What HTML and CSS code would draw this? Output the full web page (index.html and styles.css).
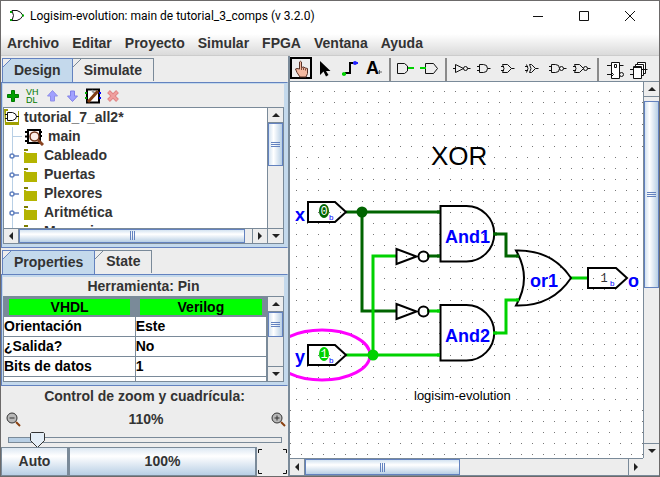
FILE: index.html
```html
<!DOCTYPE html>
<html lang="es">
<head>
<meta charset="utf-8">
<title>Logisim-evolution: main de tutorial_3_comps (v 3.2.0)</title>
<link rel="stylesheet" href="styles.css">
</head>
<body>
<svg width="0" height="0" class="defs" aria-hidden="true">
  <defs>
    <symbol id="folder" viewBox="0 0 14 16"><path d="M0 1h4v2h-4z" fill="#7d7d00"/><path d="M0 4h1.500l1 1h10.500v10h-13z" fill="#b4b400"/></symbol>
    <symbol id="handle" viewBox="0 0 10 8"><circle cx="3" cy="4" r="2" fill="#fff" stroke="#6382bf" stroke-width="1.500"/><path d="M5 4h5" stroke="#6382bf" stroke-width="1.500"/></symbol>
  </defs>
</svg>
<div class="window">
  <header class="titlebar">
    <svg class="logo" width="16" height="16" viewBox="0 0 16 16" fill="none" stroke="#111"><path d="M3 2.500h5q4 1 6 5q-2 4-6 5h-5q3-5 0-10"/><path d="M1 4h2M1 12h2M13 7.500h2" stroke="#0a0" stroke-width="2"/></svg>
    <h1>Logisim-evolution: main de tutorial_3_comps (v 3.2.0)</h1>
    <div class="winbuttons">
      <button aria-label="Minimizar"><svg width="12" height="12" viewBox="0 0 12 12"><path d="M1 6.500h10"/></svg></button>
      <button aria-label="Maximizar"><svg width="12" height="12" viewBox="0 0 12 12"><path d="M1.500 1.500h9v9h-9z"/></svg></button>
      <button aria-label="Cerrar"><svg width="12" height="12" viewBox="0 0 12 12"><path d="M1 1l10 10M11 1l-10 10"/></svg></button>
    </div>
  </header>
  <nav class="menubar">
    <button>Archivo</button><button>Editar</button><button>Proyecto</button><button>Simular</button><button>FPGA</button><button>Ventana</button><button>Ayuda</button>
  </nav>
  <main class="work">
    <aside class="side">
      <section class="pane explorer">
        <div class="tabs"><button class="tab active">Design</button><button class="tab">Simulate</button></div>
        <div class="panel">
          <div class="tools">
            <button aria-label="Añadir circuito"><svg width="16" height="16" viewBox="0 0 16 16"><path d="M6.500 2.500h3v4h4v3h-4v4h-3v-4h-4v-3h4z" fill="#00a000" stroke="#007a00"/></svg></button>
            <button aria-label="Añadir VHDL"><svg width="16" height="18" viewBox="0 0 16 18" class="vhdl"><text x="1" y="8">VH</text><text x="1" y="16">DL</text></svg></button>
            <button aria-label="Subir"><svg width="16" height="16" viewBox="0 0 16 16"><path d="M7.500 2.500l5 5.500h-3v5h-4v-5h-3z" fill="#a0a0ff" stroke="#8f8fe8"/></svg></button>
            <button aria-label="Bajar"><svg width="16" height="16" viewBox="0 0 16 16"><path d="M7.500 13.500l5-5.500h-3v-5h-4v5h-3z" fill="#a0a0ff" stroke="#8080e8"/></svg></button>
            <button aria-label="Editar aspecto"><svg width="16" height="16" viewBox="0 0 16 16"><path d="M2 1.500h12v13h-12z" fill="#fff" stroke="#000" stroke-width="2"/><path d="M1 4v2M1 9v2" stroke="#0a0" stroke-width="2"/><path d="M15 4v2M15 9v2" stroke="#00f" stroke-width="2"/><path d="M7 2q1 3 4 3" stroke="#999" stroke-width="2" fill="none"/><path d="M3 14l10-11" stroke="#803c14" stroke-width="3"/></svg></button>
            <button aria-label="Eliminar"><svg width="16" height="16" viewBox="0 0 16 16"><path d="M3.500 3.500l9 9M12.500 3.500l-9 9" stroke="#df8585" stroke-width="4"/><path d="M4 4l8 8M12 4l-8 8" stroke="#f0a0a0" stroke-width="2"/></svg></button>
          </div>
          <div class="scroller">
            <ul class="tree">
              <li class="root"><svg width="17" height="17" viewBox="0 0 17 17"><path d="M0 0h4v2h11v14h-14z" fill="#a0a000"/><path d="M2 2h12v11h-12z" fill="#fff"/><path d="M3.500 3.500h5q4 1 4 4t-4 4h-5z" fill="#fff" stroke="#111"/><path d="M1 5.500h3M1 9.500h3M12 7.500h3" stroke="#111"/></svg>tutorial_7_all2*</li>
              <li class="circuit"><svg width="19" height="18" viewBox="0 0 19 18"><path d="M3 2h12v13h-12z" fill="#fff" stroke="#000" stroke-width="2"/><path d="M0 4h3M0 8.500h3M0 13h3M15 4h2M15 8h2" stroke="#000" stroke-width="2"/><circle cx="9.500" cy="8.500" r="4.500" fill="#fbeee8" stroke="#70351a" stroke-width="1.500"/><path d="M13 12l5 5" stroke="#8a4420" stroke-width="3"/></svg>main</li>
              <li><svg class="handle" width="10" height="8"><use href="#handle"/></svg><svg width="14" height="16"><use href="#folder"/></svg>Cableado</li>
              <li><svg class="handle" width="10" height="8"><use href="#handle"/></svg><svg width="14" height="16"><use href="#folder"/></svg>Puertas</li>
              <li><svg class="handle" width="10" height="8"><use href="#handle"/></svg><svg width="14" height="16"><use href="#folder"/></svg>Plexores</li>
              <li><svg class="handle" width="10" height="8"><use href="#handle"/></svg><svg width="14" height="16"><use href="#folder"/></svg>Aritmética</li>
              <li><svg class="handle" width="10" height="8"><use href="#handle"/></svg><svg width="14" height="16"><use href="#folder"/></svg>Memoria</li>
            </ul>
            <div class="vbar"><button class="up" aria-label="Arriba"></button><div class="rail"><i class="thumb tree-v"></i></div><button class="down" aria-label="Abajo"></button></div>
            <div class="hbar"><button class="left" aria-label="Izquierda"></button><div class="rail"><i class="thumb tree-h"></i></div><button class="right" aria-label="Derecha"></button></div>
          </div>
        </div>
      </section>
      <section class="pane props">
        <div class="tabs"><button class="tab active">Properties</button><button class="tab">State</button></div>
        <div class="panel">
          <h2>Herramienta: Pin</h2>
          <div class="scroller">
            <div class="tablebox">
              <table>
                <thead><tr><th><button>VHDL</button></th><th><button>Verilog</button></th></tr></thead>
                <tbody>
                  <tr><td>Orientación</td><td>Este</td></tr>
                  <tr><td>¿Salida?</td><td>No</td></tr>
                  <tr><td>Bits de datos</td><td>1</td></tr>
                  <tr><td></td><td></td></tr>
                </tbody>
              </table>
            </div>
            <div class="vbar"><button class="up" aria-label="Arriba"></button><div class="rail"><i class="thumb props-v"></i></div><button class="down" aria-label="Abajo"></button></div>
          </div>
        </div>
      </section>
      <section class="zoom">
        <label for="zoom">Control de zoom y cuadrícula:</label>
        <div class="zoomrow">
          <button aria-label="Alejar"><svg width="15" height="16" viewBox="0 0 15 16"><circle cx="6" cy="6" r="5" fill="#b8b8b8" stroke="#333"/><path d="M3.500 6h5" stroke="#333"/><path d="M10 10l4 4" stroke="#8a4010" stroke-width="2"/></svg></button>
          <output for="zoom">110%</output>
          <button aria-label="Acercar"><svg width="15" height="16" viewBox="0 0 15 16"><circle cx="6" cy="6" r="5" fill="#b8b8b8" stroke="#333"/><path d="M3.500 6h5M6 3.500v5" stroke="#333"/><path d="M10 10l4 4" stroke="#8a4010" stroke-width="2"/></svg></button>
        </div>
        <input id="zoom" type="range" min="0" max="100" value="8">
        <div class="zoombuttons">
          <button class="auto">Auto</button><button class="full">100%</button>
          <button class="grid" aria-label="Cuadrícula"><svg width="31" height="28" viewBox="0 0 31 28" fill="none" stroke="#111"><path d="M1.500 5v-3.500h3.500M26 1.500h3.500v3.500M1.500 22v3.500h3.500M26 25.500h3.500v-3.500"/></svg></button>
        </div>
      </section>
    </aside>
    <section class="editor">
      <div class="toolbar">
        <button aria-label="Pulsar"><svg width="24" height="24" viewBox="0 0 24 24"><path d="M1 1h20v20h-20z" fill="#ededed" stroke="#000" stroke-width="2"/><path d="M9.500 12v-7q1-1.500 2 0v5.500l2-.5l2 1l2 .5v5l-1.500 3.500h-6l-3-4.500l-1.500-3.500l1.500-.5z" fill="#f4b9a0" stroke="#5a3226"/><path d="M11.500 10v3M13.500 10.500v2.500M15.500 11.500v2" stroke="#7a4a3a" fill="none"/></svg></button>
        <button aria-label="Editar"><svg width="24" height="24" viewBox="0 0 24 24"><path d="M6 4v14l3.500-3.500l2.500 5l2.500-1.500l-2.500-4h4.500z" fill="#000"/></svg></button>
        <button aria-label="Cablear"><svg width="24" height="24" viewBox="0 0 24 24"><path d="M7 16h5v-10h4" fill="none" stroke="#000" stroke-width="2"/><circle cx="6" cy="17" r="2" fill="#00d200"/><path d="M4 17h4" stroke="#00d200" stroke-width="2"/><circle cx="17" cy="6" r="2" fill="#22f"/><path d="M15 6h5" stroke="#22f" stroke-width="2"/></svg></button>
        <button aria-label="Texto"><svg width="24" height="24" viewBox="0 0 24 24"><text x="4" y="17" class="letter">A</text><path d="M17.500 13v4M16 15h4" stroke="#666"/></svg></button>
        <span class="sep"></span>
        <button aria-label="Pin de entrada"><svg class="gate" width="24" height="24" viewBox="0 0 24 24"><path d="M3.500 6.500h7l3 2.500v5l-3 2.500h-7z"/><path d="M14 11h6" class="on"/></svg></button>
        <button aria-label="Pin de salida"><svg class="gate" width="24" height="24" viewBox="0 0 24 24"><path d="M7.500 6.500h8l4 5l-4 5h-8z"/><path d="M2 11h6" class="on"/></svg></button>
        <span class="sep"></span>
        <button aria-label="NOT"><svg class="gate" width="24" height="24" viewBox="0 0 24 24"><path d="M3 11.500h2.500M5.500 7.500v8l8-4zM17.500 11.500h3"/><circle cx="15.500" cy="11.500" r="2"/></svg></button>
        <button aria-label="AND"><svg class="gate" width="24" height="24" viewBox="0 0 24 24"><path d="M5.500 7.500h4q4 0 4 4t-4 4h-4zM3 9.500h2.500M3 13.500h2.500M13.500 11.500h3"/></svg></button>
        <button aria-label="OR"><svg class="gate" width="24" height="24" viewBox="0 0 24 24"><path d="M4.500 7.500h5l4 4l-4 4h-5q3-4 0-8M3 9.500h3M3 13.500h3M13.500 11.500h3"/></svg></button>
        <button aria-label="XOR"><svg class="gate" width="24" height="24" viewBox="0 0 24 24"><path d="M4.500 7.500q3 4 0 8M7.500 7.500h2l4 4l-4 4h-2q3-4 0-8M3 9.500h3M3 13.500h3M13.500 11.500h3"/></svg></button>
        <button aria-label="NAND"><svg class="gate" width="24" height="24" viewBox="0 0 24 24"><path d="M5.500 7.500h4q4 0 4 4t-4 4h-4zM3 9.500h2.500M3 13.500h2.500M17.500 11.500h3"/><circle cx="15.500" cy="11.500" r="2"/></svg></button>
        <button aria-label="NOR"><svg class="gate" width="24" height="24" viewBox="0 0 24 24"><path d="M4.500 7.500h5l4 4l-4 4h-5q3-4 0-8M3 9.500h3M3 13.500h3M17.500 11.500h3"/><circle cx="15.500" cy="11.500" r="2"/></svg></button>
        <span class="sep"></span>
        <button aria-label="Biestable"><svg class="gate" width="24" height="24" viewBox="0 0 24 24"><path d="M9.500 5.500h8v16h-8z" fill="#fff"/><path d="M5 8.500h4.500M5 17.500h4.500M17.500 8.500h4M12.500 7.500v3h2v-3zM9.500 15.500l2 2l-2 2"/><circle cx="19.500" cy="17.500" r="2"/></svg></button>
        <button aria-label="Registro"><svg class="gate" width="24" height="24" viewBox="0 0 24 24"><path d="M11.500 5.500h8v11h-8z" fill="#fff"/><path d="M9.500 7.500h8v11h-8z" fill="#fff"/><path d="M7.500 9.500h8v12h-8z" fill="#fff"/><path d="M4 12.500h3.500M4 17.500h3.500M8 10.500h7M15.500 12.500h6"/></svg></button>
      </div>
      <div class="scroller">
        <div class="canvas">
          <svg class="circuit-drawing" width="1600" height="1000" viewBox="290 82 1600 1000">
            <defs>
              <pattern id="dotsA" x="301" y="91" width="11" height="11" patternUnits="userSpaceOnUse"><path d="M0 0h1v1h-1z" fill="#777"/></pattern>
              <pattern id="dotsB" x="296" y="91" width="11" height="11" patternUnits="userSpaceOnUse"><path d="M0 0h1v1h-1z" fill="#777"/></pattern>
            </defs>
            <rect x="290" y="81" width="1600" height="71" fill="url(#dotsA)"/>
            <rect x="290" y="152" width="1600" height="252" fill="url(#dotsB)"/>
            <rect x="290" y="404" width="1600" height="700" fill="url(#dotsA)"/>
            <ellipse cx="322" cy="355" rx="48" ry="25" class="mark"/>
            <g class="wire low"><path d="M346 212h94M362 212v99h34M427 256h13M494 234h12v22h13"/><circle cx="362" cy="212" r="4"/></g>
            <g class="wire high"><path d="M346 355h94M373 355v-99h23M427 311h13M494 333h12v-33h13M570 278h18"/><circle cx="373" cy="355" r="4"/></g>
            <g class="shape">
              <path d="M308 202h27l11 10l-11 10h-27z"/>
              <path d="M308 345h27l11 10l-11 10h-27z"/>
              <path d="M588 268h28l11 10l-11 10h-28z"/>
              <path d="M396.500 249v15l20-7.500z"/><circle cx="423.500" cy="256.500" r="5"/>
              <path d="M396.500 304v15l20-7.500z"/><circle cx="423.500" cy="311.500" r="5"/>
              <path d="M440.500 206h26a27.500 27.500 0 0 1 0 55.500h-26z"/>
              <path d="M440.500 305h26a27.500 27.500 0 0 1 0 55.500h-26z"/>
              <path d="M516 250.500q36-1 55 27.500q-19 28.500-55 27.500q16-27.500 0-55z"/>
            </g>
            <g class="wire low tip"><path d="M437 212h3M437 256h3M493 234h4M516 256h3"/></g>
            <g class="wire high tip"><path d="M437 311h3M437 355h3M493 333h4M516 300h3"/></g>
            <ellipse cx="324" cy="211" rx="5" ry="7" fill="#006400"/><ellipse cx="324" cy="354" rx="5" ry="7" fill="#00d200"/>
            <g class="bit"><text x="324" y="215" fill="#fff">0</text><text x="324" y="358" fill="#fff">1</text><text x="604" y="282" fill="#333">1</text></g>
            <g class="radix"><text x="329" y="220">b</text><text x="329" y="363">b</text><text x="610" y="286">b</text></g>
            <g class="label"><text x="295" y="221">x</text><text x="295" y="363">y</text><text x="628" y="287">o</text><text x="445" y="243">And1</text><text x="445" y="342">And2</text><text x="530" y="287">or1</text></g>
            <text x="431" y="165" class="heading">XOR</text>
            <text x="414" y="400" class="caption">logisim-evolution</text>
          </svg>
        </div>
        <div class="vbar"><button class="up" aria-label="Arriba"></button><div class="rail"><i class="thumb main-v"></i></div><button class="down" aria-label="Abajo"></button></div>
        <div class="hbar"><button class="left" aria-label="Izquierda"></button><div class="rail"><i class="thumb main-h"></i></div><button class="right" aria-label="Derecha"></button></div>
      </div>
    </section>
  </main>
</div>
</body>
</html>
```
FILE: styles.css
```css
* { box-sizing: border-box; }
html, body { height: 100%; }
body { margin: 0; background: #ededed; color: #333; font: bold 14px/19px "Liberation Sans", Arial, sans-serif; }
button { margin: 0; padding: 0; border: 0; background: none; color: inherit; font: inherit; }
svg { display: block; flex: none; }
.defs { position: absolute; }
.window { display: flex; flex-direction: column; height: 100vh; overflow: hidden; border: 1px solid #6c6a6a; }

.titlebar { display: flex; align-items: center; flex: none; height: 33px; padding: 0 6px 4px 8px; background: #fff; }
.titlebar h1 { flex: 1; margin: 0 0 0 5px; color: #000; font: 12px/16px Roboto, "Noto Sans", sans-serif; white-space: nowrap; }
.winbuttons { display: flex; }
.winbuttons button { display: flex; justify-content: center; width: 46px; }
.winbuttons svg { fill: none; stroke: #111; }

.menubar { display: flex; gap: 13px; flex: none; height: 22px; padding: 0 6px; background: linear-gradient(#fff, #dadada); border-bottom: 1px solid #ccc; }
.menubar button { height: 19px; }

.work { display: flex; flex: 1; min-height: 0; }
.side { display: flex; flex-direction: column; flex: 0 0 289px; border-right: 2px solid #7a8a99; }

.tabs { display: flex; height: 24px; padding: 0 1px; }
.tab { height: 23px; padding: 0 11px; border: 1px solid #7a8a99; border-bottom: 0; border-left: 0; background: linear-gradient(135deg, transparent 5px, #7a8a99 5px, #7a8a99 6px, #ededed 6px); }
.tab.active { height: 24px; border-color: #6382bf; border-left: 1px solid #6382bf; background: linear-gradient(135deg, #ededed 5px, #6382bf 5px, #6382bf 6px, #c4d9ec 6px); }
.panel { flex: 1; min-height: 0; display: flex; flex-direction: column; padding: 2px 3px 3px 1px; background: #c4d9ec; border: 1px solid #6382bf; border-right-color: #c4d9ec; }
.pane { display: flex; flex-direction: column; min-height: 0; padding-top: 2px; }
.explorer { flex: 192 1 0; }
.explorer .panel { padding-top: 1px; }
.props { flex: 138 1 0; }

.tools { display: flex; align-items: center; gap: 4px; height: 23px; padding-left: 2px; background: #ededed; }
.vhdl text { fill: #007a00; font: 9px "Liberation Sans", sans-serif; }

.scroller { display: grid; grid-template: minmax(0, 1fr) auto / minmax(0, 1fr) auto; flex: 1; min-height: 0; border: 1px solid #7a8a99; background: #ededed; }
.tree { margin: 0; padding: 0; overflow: hidden; list-style: none; background: linear-gradient(#b8cfe5, #b8cfe5) 8px 19px / 1px 100% no-repeat #fff; }
.tree li { display: flex; align-items: center; height: 19px; padding-left: 5px; }
.tree li svg + svg { margin: 0 6px 0 5px; }
.tree li.root { padding-left: 0; gap: 3px; }
.tree li.circuit { padding-left: 21px; gap: 4px; background: linear-gradient(#b8cfe5, #b8cfe5) 8px 9px / 10px 1px no-repeat; }

.vbar, .hbar { display: flex; background: #ededed; }
.vbar { flex-direction: column; width: 16px; border-left: 1px solid #7a8a99; }
.explorer .vbar { grid-row: 1 / 3; grid-column: 2; }
.hbar { height: 15px; border-top: 1px solid #7a8a99; }
.rail { flex: 1; display: flex; min-width: 0; min-height: 0; }
.vbar .rail { flex-direction: column; border: solid #7a8a99; border-width: 1px 0; }
.hbar .rail { border: solid #7a8a99; border-width: 0 1px; }
.vbar button, .hbar button { display: flex; align-items: center; justify-content: center; flex: 0 0 14px; }
.vbar button::before, .hbar button::before { content: ""; border: 4px solid transparent; }
.vbar .up::before { border-top: 0; border-bottom: 4px solid #222; }
.vbar .down::before { border-bottom: 0; border-top: 4px solid #222; }
.hbar .left::before { border-left: 0; border-right: 4px solid #222; }
.hbar .right::before { border-right: 0; border-left: 4px solid #222; }
.thumb { display: flex; align-items: center; justify-content: center; border: 1px solid #6382bf; background: linear-gradient(90deg, #d4e3f1, #fff 35%, #b8cfe5); }
.thumb::before { content: ""; width: 9px; height: 5px; background: repeating-linear-gradient(#6382bf 0 1px, transparent 1px 2px); }
.hbar .thumb { background: linear-gradient(#d4e3f1, #fff 35%, #b8cfe5); }
.hbar .thumb::before { width: 5px; height: 9px; background: repeating-linear-gradient(90deg, #6382bf 0 1px, transparent 1px 2px); }
.tree-v { height: 41%; }
.tree-h { width: 97%; }
.props-v { height: 46%; }
.main-v { height: 54%; margin-top: 4px; }
.main-h { width: 48%; }

.props h2 { margin: 0; background: #ededed; font: inherit; text-align: center; }
.tablebox { overflow: hidden; background: #fff; }
table { width: 100%; border-collapse: collapse; table-layout: fixed; color: #000; }
th { height: 20px; padding: 1px 5px; background: #7a8a99; }
th button { display: block; width: 100%; height: 16px; background: #0f0; line-height: 16px; }
td { height: 20px; padding: 0; border: solid #7a8a99; border-width: 0 1px 1px 0; line-height: 19px; }

.zoom { flex: none; text-align: center; }
.zoom label { display: block; padding-top: 1px; height: 21px; }
.zoomrow { display: flex; align-items: center; justify-content: space-between; height: 25px; padding: 0 2px 0 5px; }
#zoom { display: block; width: calc(100% - 13px); height: 15px; margin: 0 6px 0 7px; background: none; appearance: none; }
#zoom::-webkit-slider-runnable-track { height: 6px; border: 1px solid #7a8a99; background: linear-gradient(90deg, #b8cfe5 10%, #ededed 10%); }
#zoom::-webkit-slider-thumb { appearance: none; width: 15px; height: 16px; margin-top: -6px; background: url("data:image/svg+xml,%3Csvg xmlns='http://www.w3.org/2000/svg' width='15' height='16'%3E%3Cpath d='M1.500 .5h12l1 1v7l-7 7l-7-7v-7z' fill='%23e4eef7' stroke='%23333'/%3E%3C/svg%3E"); }
.zoombuttons { display: flex; height: 29px; }
.auto, .full { border: 1px solid #7a8a99; background: linear-gradient(#dde8f3, #fff 30%, #b8cfe5); }
.auto { flex: 0 0 67px; }
.full { flex: 1; border-width: 1px 2px; }

.editor { display: flex; flex: 1; flex-direction: column; min-width: 0; }
.toolbar { display: flex; flex: none; height: 25px; padding-top: 1px; }
.toolbar button { flex: 0 0 24px; }
.sep { flex: 0 0 2px; margin: 1px 3px 0; background: #8a8a8a; }
.gate { fill: none; stroke: #111; }
.gate .on { stroke: #00d200; stroke-width: 2; }
.letter { font: bold 18px "Liberation Sans", sans-serif; }
.editor .scroller { border-width: 1px 0; }
.editor .hbar { height: 17px; }
.canvas { position: relative; overflow: hidden; background: #fff; }
.circuit-drawing { position: absolute; top: 0; left: 0; }
.wire { fill: none; stroke-width: 3; }
.wire.low { stroke: #006400; }
.wire.high { stroke: #00d200; }
.wire.low circle { fill: #006400; }
.wire.high circle { fill: #00d200; }
.shape { fill: none; stroke: #000; stroke-width: 2; }
.mark { fill: none; stroke: #f0f; stroke-width: 3; }
.bit { font: 12px "Liberation Mono", monospace; text-anchor: middle; }
.radix { fill: #00f; font: 8px "Liberation Sans", sans-serif; }
.label { fill: #00f; font: bold 18px "Liberation Sans", sans-serif; }
.heading { fill: #000; font: 26px "Liberation Sans", sans-serif; }
.caption { fill: #000; font: 13px "Liberation Sans", sans-serif; }
```
